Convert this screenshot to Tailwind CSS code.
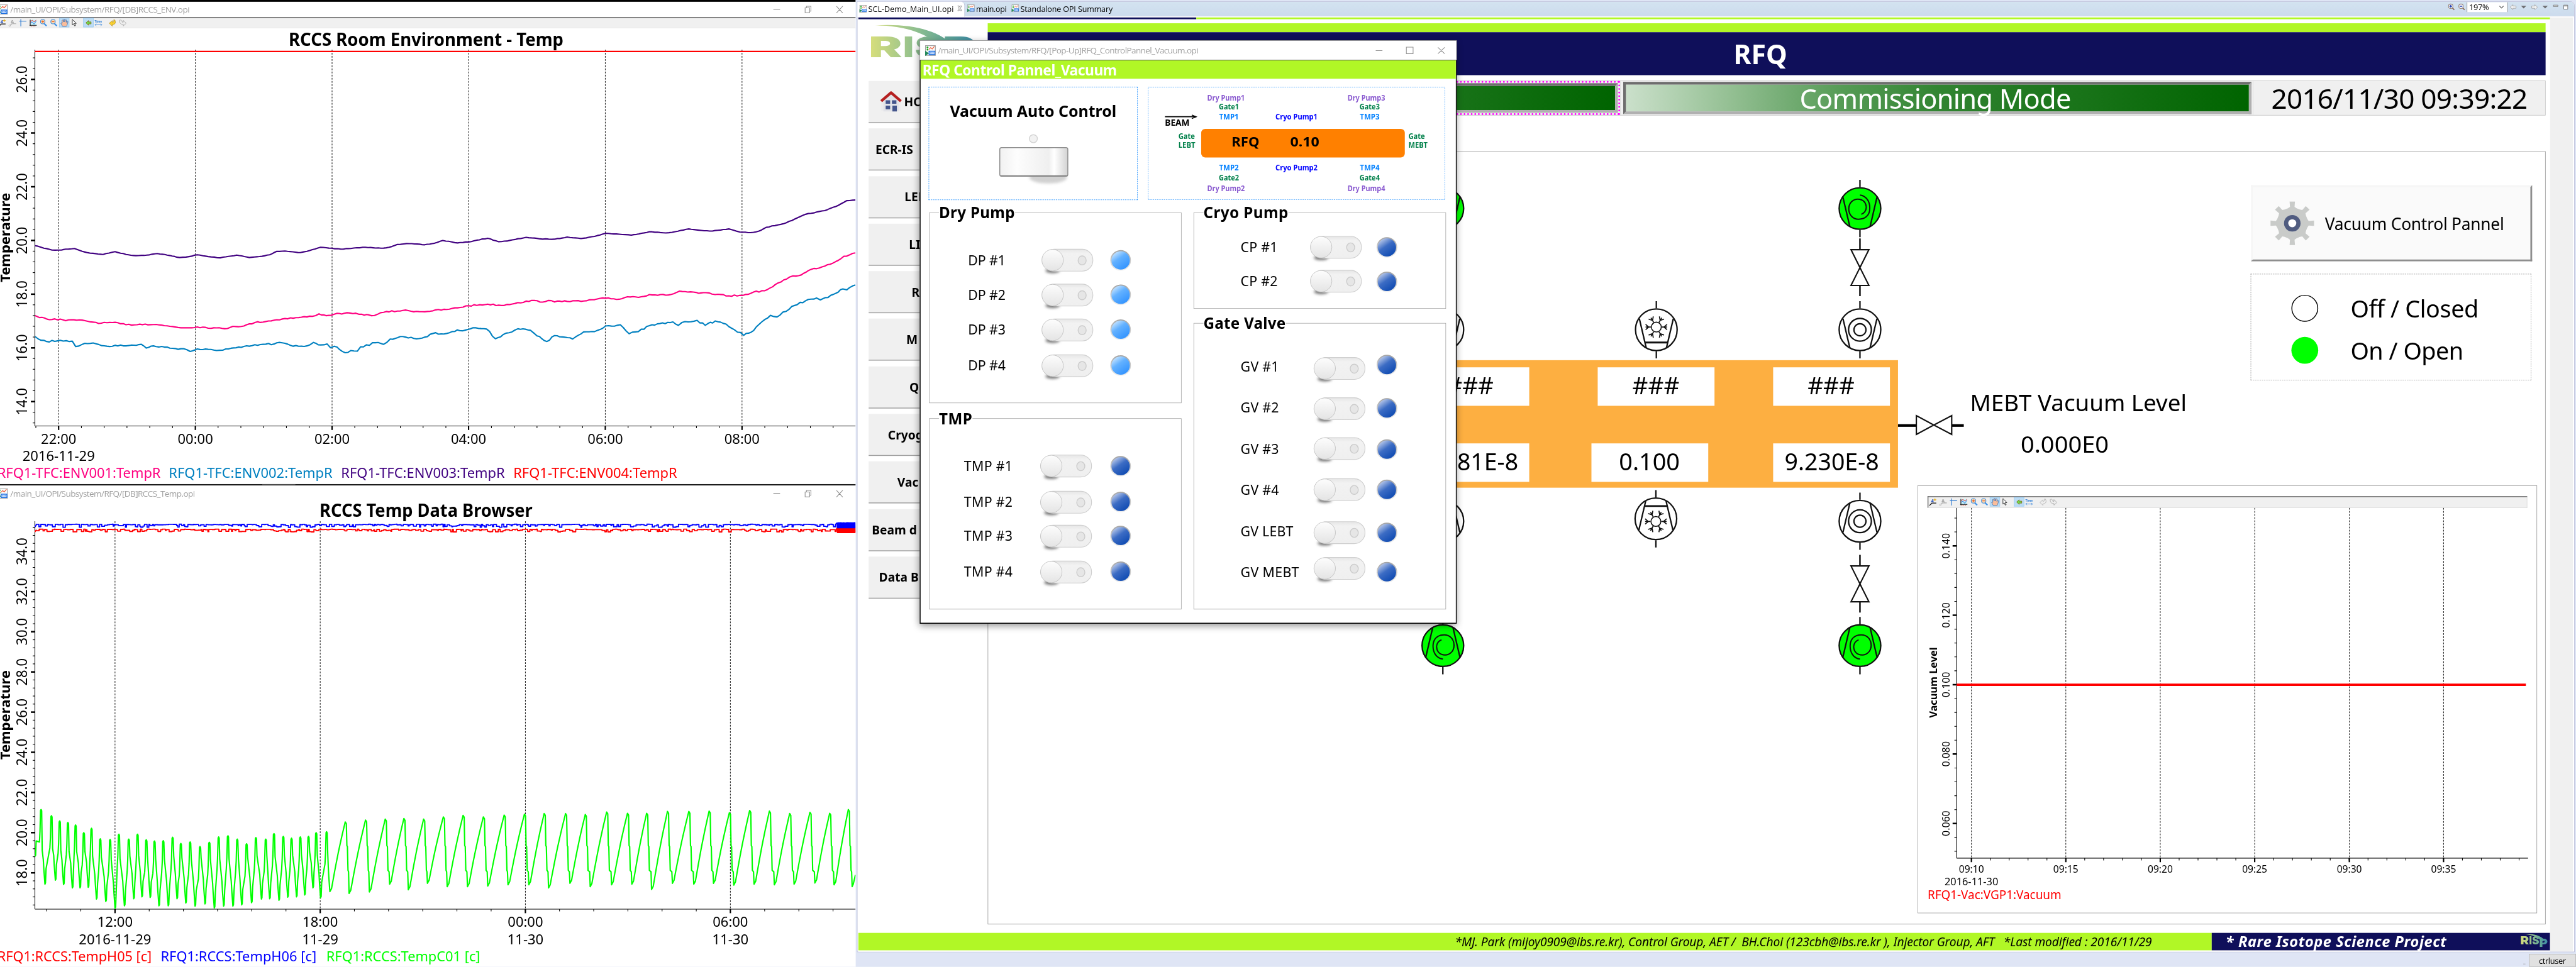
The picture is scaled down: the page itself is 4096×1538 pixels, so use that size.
<!DOCTYPE html>
<html lang="en">
<head>
<meta charset="utf-8">
<title>SCL-Demo Main UI - RFQ</title>
<script src="https://cdn.jsdelivr.net/npm/@tailwindcss/browser@4"></script>
</head>
<body class="w-[4096px] h-[1538px] overflow-hidden bg-white">
<!-- shared symbols -->
<svg class="absolute w-0 h-0" aria-hidden="true">
  <defs>
    <linearGradient id="risp" gradientUnits="userSpaceOnUse" x1="0" y1="0" x2="235" y2="0">
      <stop offset="0" stop-color="#d9df7b"/><stop offset=".45" stop-color="#8fbf8f"/><stop offset=".75" stop-color="#5fa596"/><stop offset="1" stop-color="#3f8ca6"/>
    </linearGradient>
    <linearGradient id="knob" x1="0" y1="0" x2="0" y2="1"><stop offset="0" stop-color="#fdfdfd"/><stop offset="1" stop-color="#e4e4e4"/></linearGradient>
    <linearGradient id="track" x1="0" y1="0" x2="0" y2="1"><stop offset="0" stop-color="#e6e6e6"/><stop offset=".2" stop-color="#f2f2f2"/><stop offset="1" stop-color="#efefef"/></linearGradient>
    <linearGradient id="ledOn" x1=".1" y1="0.05" x2=".7" y2=".9"><stop offset="0" stop-color="#d4ebff"/><stop offset=".45" stop-color="#63b1ff"/><stop offset="1" stop-color="#3897ff"/></linearGradient>
    <linearGradient id="ledOff" x1=".1" y1="0.05" x2=".7" y2=".9"><stop offset="0" stop-color="#c9d4ee"/><stop offset=".5" stop-color="#3c6cc4"/><stop offset="1" stop-color="#154fb4"/></linearGradient>
    <linearGradient id="ring" x1="0" y1="0" x2="0" y2="1"><stop offset="0" stop-color="#a2a2a2"/><stop offset="1" stop-color="#f0f0f0"/></linearGradient>
    <linearGradient id="rocker" x1="0" y1="0" x2="1" y2="0"><stop offset="0" stop-color="#f1f1f1"/><stop offset=".25" stop-color="#fdfdfd"/><stop offset=".72" stop-color="#efefef"/><stop offset=".8" stop-color="#ffffff"/><stop offset="1" stop-color="#d2d2d2"/></linearGradient>
    <filter id="soft" x="-50%" y="-50%" width="200%" height="200%"><feGaussianBlur stdDeviation="3"/></filter>

    <symbol id="opi" viewBox="0 0 24 24">
      <rect x="1" y="1" width="22" height="22" fill="#fafafa" stroke="#9b9b9b" stroke-width="1.6"/>
      <circle cx="5.500" cy="5" r="2" fill="#19a519"/><circle cx="5.500" cy="10" r="2" fill="#19a519"/>
      <path d="M0 12.500 L9 18 L0 24Z" fill="#23895a"/>
      <path d="M8.500 9.500 L12.500 5.500 L16 8.500 L21 2.500" fill="none" stroke="#ee5a33" stroke-width="1.600"/>
      <rect x="9" y="13.500" width="13" height="7.500" fill="#dceaff" stroke="#1c6fe0" stroke-width="2"/>
      <path d="M11.500 17.300h8" stroke="#1c6fe0" stroke-width="1.800" stroke-dasharray="1.800 1.200"/>
    </symbol>

    <symbol id="toolbar" viewBox="-7 40 300 22" overflow="visible">
      <g font-family="Noto Sans" font-weight="700">
        <path d="M-3 59 L3 53.500 H12.500" fill="none" stroke="#111" stroke-width="1.800"/><text x="1" y="52" font-size="10" font-style="italic" fill="#2a52be">A</text><path d="M9.500 43v6M6.500 46h6" stroke="#e8b020" stroke-width="1.800"/>
        <path d="M22 57 L26.500 53 H36" fill="none" stroke="#a5a5a5" stroke-width="1.600"/><circle cx="21.500" cy="57.500" r="1.700" fill="#fff" stroke="#a5a5a5"/><text x="24" y="52" font-size="10.500" fill="#a5a5a5">A</text>
        <path d="M46.500 43v16M43 47.500h16" stroke="#2f7bd0" stroke-width="1.600"/>
        <rect x="68" y="44" width="13" height="12" fill="#c8f4fa"/><path d="M67.500 44v14M66 56.500h16" stroke="#111" stroke-width="1.500"/><path d="M68 49l4-4 4 4 5-4" fill="none" stroke="#e02020" stroke-width="1.300"/><path d="M68 52l4-3 4 5 5-7" fill="none" stroke="#2a6fe0" stroke-width="1.300"/><path d="M69 58.500h12" stroke="#d03010" stroke-width="1.200" stroke-dasharray="2 2"/>
        <path d="M98 52l6 6" stroke="#3a8fe8" stroke-width="3"/><circle cx="95.500" cy="48.500" r="5" fill="#ffd9b0" stroke="#3f8ddd" stroke-width="1.500"/><path d="M92.500 48.500h6M95.500 45.500v6" stroke="#e25a1a" stroke-width="1.500"/>
        <path d="M121 52l6 6" stroke="#3a8fe8" stroke-width="3"/><circle cx="118.500" cy="48.500" r="5" fill="#ffd9b0" stroke="#3f8ddd" stroke-width="1.500"/><path d="M115.500 48.500h6" stroke="#e25a1a" stroke-width="1.500"/>
        <rect x="132.500" y="40.500" width="22" height="20" fill="#bcdcf4" stroke="#90c8f6"/><path d="M140 59 L136 52 q1-2 3 0 L138.500 45.500 q1.500-1.500 2.500 0 L142 49 V43.500 q1.300-1 2.500 0 V49 L146.500 44 q1.500-.5 2 .8 L148 50 L150.500 47.500 q1.500 0 1.300 1.500 L149.500 57 L148 59Z" fill="#fbbd9a" stroke="#2f6fb8" stroke-width="1.100"/>
        <path d="M161.500 43.500v12l2.800-2.500 2.500 5 2-1-2.300-4.800h4z" fill="#fff" stroke="#111" stroke-width="1.200"/>
        <rect x="186.500" y="40.500" width="22" height="20" fill="#bcdcf4" stroke="#90c8f6"/><path d="M192 51l5.500-5v3h6v4.500h-6v3z" fill="#6fdc4a" stroke="#8a6a1a" stroke-width="1.200"/>
        <text x="211.500" y="50" font-size="6.800" textLength="16.500" lengthAdjust="spacingAndGlyphs" fill="#2f80d8">Time</text><path d="M212.500 55.500h15M215 53l-2.500 2.500 2.500 2.500M225 53l2.500 2.500-2.500 2.500" fill="none" stroke="#2f80d8" stroke-width="1.100"/>
        <path d="M267 45.500c3-2 6 0 6 4h2.500v-4l6.500 6.500-6.500 6v-3.500c-6 .5-8.500-3-8.500-9z" fill="#eee" stroke="#a5a5a5" stroke-width="1.200"/>
      </g>
    </symbol>
    <path id="undo" d="M256.500 44.500c3 6 1 10.500-5.500 10.500v3.500l-7-6.500 7-6v3.500c3.500 0 4-2 3-5z"/>

    <!-- vacuum diagram symbols, centred on the origin -->
    <g id="body" stroke="#111" stroke-width="3.200" fill="none">
      <path d="M0 -64V-48M0 48V64"/><circle r="46.500"/><path d="M-38 -25L-22.500 41M38 -25L22.500 41"/>
    </g>
    <g id="tmp"><circle r="46" fill="#fff"/><use href="#body"/><circle r="25.500" fill="none" stroke="#111" stroke-width="3.200"/><circle r="13.500" fill="none" stroke="#111" stroke-width="3"/></g>
    <g id="dry"><circle r="46" fill="#00ff00"/><use href="#body"/><path d="M0 -30C15 -28 22 -15 22 -1C22 15 12 24 -3 24C-16 24 -25 14 -25 1C-25 -12 -16 -21 -5 -21C8 -21 14 -12 14 -2C14 5 9 11 3 13" fill="none" stroke="#111" stroke-width="2.800"/></g>
    <g id="arm" fill="none" stroke="#111" stroke-width="2.400"><path d="M12 0H24M24 -6L17 0L24 6"/></g>
    <g id="flake"><circle r="11" fill="none" stroke="#111" stroke-width="2.200"/><use href="#arm"/><use href="#arm" transform="rotate(60)"/><use href="#arm" transform="rotate(120)"/><use href="#arm" transform="rotate(180)"/><use href="#arm" transform="rotate(240)"/><use href="#arm" transform="rotate(300)"/></g>
    <g id="cryo"><circle r="46" fill="#fff"/><use href="#body"/><path d="M-25 28.500H25" stroke="#111" stroke-width="4"/><use href="#flake" y="-6"/></g>
    <g id="valve" fill="#fff" stroke="#111" stroke-width="3"><path d="M0 -65V-40M0 40V64" stroke-width="3.500"/><path d="M-20 -40H20L0 0ZM-20 40H20L0 0Z"/></g>

    <symbol id="switch" viewBox="-2 -2 120 62" overflow="visible">
      <ellipse cx="24" cy="49" rx="16" ry="5.500" fill="#777" filter="url(#soft)"/>
      <rect x="4" y="1" width="110" height="49" rx="24" fill="url(#track)" stroke="#cfcfcf" stroke-width="1.600"/>
      <ellipse cx="90" cy="26" rx="9" ry="10" fill="#e6e6e6" stroke="#cccccc" stroke-width="2"/>
      <circle cx="24" cy="25.500" r="24" fill="url(#knob)" stroke="#bdbdbd" stroke-width="1.200"/>
    </symbol>
  </defs>
</svg>

<div class="w-[4096px] h-[1538px] overflow-hidden [contain:strict]">
<div class="flex w-[5756px] h-[2161px] origin-top-left scale-[0.71161] bg-[#dfe5f5] font-['Noto_Sans',sans-serif] text-black overflow-hidden">

  <!-- left monitor: two trend windows -->
  <div class="flex flex-col w-[1912px] shrink-0 bg-white overflow-hidden">
    <div class="h-[4px] shrink-0 bg-black"></div>
    <div class="flex items-center h-[34px] shrink-0 text-[#a0a0a0]">
      <svg class="w-[25px] h-[24px] -ml-[7px] mr-[5px] shrink-0"><use href="#opi" width="25" height="24"/></svg>
      <span class="font-['Open_Sans',sans-serif] text-[19px] leading-none whitespace-pre" data-w="400">/main_UI/OPI/Subsystem/RFQ/[DB]RCCS_ENV.opi</span>
      <svg class="ml-auto w-[188px] h-[24px] shrink-0" viewBox="-12 0 188 24" fill="none" stroke="#8f8f8f" stroke-width="1.500"><path d="M-8 12h15M63 8.500h10v11h-10zM66 8.500v-3.500h10v11h-3M133 5l14 15M147 5l-14 15" /></svg>
    </div>
    <div class="h-[25px] shrink-0 bg-[#f0f0f0] border-t-2 border-t-[#696969] border-b border-b-[#e3e3e3]">
      <svg class="w-[300px] h-[22px] -ml-[7px] overflow-visible"><use href="#toolbar" width="300" height="22"/><g transform="translate(7 -40)"><use href="#undo" fill="#f8d030" stroke="#b08a18"/></g></svg>
    </div>
    <svg id="env" class="w-[1912px] h-[1019px] shrink-0" viewBox="0 63 1912 1019"></svg>
    <div class="h-[3px] bg-[#1c1c1c] shrink-0 pl-[586px]"><div class="w-[74px] h-[3px] bg-[#4a4a4a]"></div></div>
    <div class="flex items-center h-[36px] shrink-0 text-[#a0a0a0]">
      <svg class="w-[25px] h-[24px] -ml-[7px] mr-[5px] shrink-0"><use href="#opi" width="25" height="24"/></svg>
      <span class="font-['Open_Sans',sans-serif] text-[19px] leading-none whitespace-pre" data-w="412">/main_UI/OPI/Subsystem/RFQ/[DB]RCCS_Temp.opi</span>
      <svg class="ml-auto w-[188px] h-[24px] shrink-0" viewBox="-12 0 188 24" fill="none" stroke="#8f8f8f" stroke-width="1.500"><path d="M-8 12h15M63 8.500h10v11h-10zM66 8.500v-3.500h10v11h-3M133 5l14 15M147 5l-14 15" /></svg>
    </div>
    <svg id="temp" class="w-[1912px] h-[1040px] shrink-0" viewBox="0 1121 1912 1040"></svg>
  </div>

  <!-- right monitor: main operator window -->
  <div class="relative flex flex-col flex-1 pt-[3px] pl-[3px]">
    <div class="flex flex-col h-[2125px] w-[3838px] shrink-0 bg-white border border-[#b2b6d0] rounded-tr-[10px]">
      <!-- tab bar -->
      <div class="flex h-[33px] shrink-0 bg-gradient-to-b from-[#d3e3f0] to-[#ccdbed] border-b border-[#b2b6d0] rounded-tr-[10px] font-['Open_Sans',sans-serif] text-[17.5px] leading-none text-black">
        <div class="flex items-center w-[240px] h-[34px] shrink-0 bg-white rounded-tr-[8px] border-r border-[#b2b6d0] pl-[4px]">
          <svg class="w-[17px] h-[17px] mb-[4px] mr-[3px] shrink-0"><use href="#opi" width="17" height="17"/></svg><span class="whitespace-pre" data-w="191">SCL-Demo_Main_UI.opi</span>
          <svg class="w-[11px] h-[13px] ml-[8px] mb-[6px] shrink-0" viewBox="0 0 11 13"><path d="M1 1h3l1.500 3L7 1h3L7 6.500 10 12H7L5.500 9 4 12H1L4 6.500z" fill="#fff" stroke="#777"/></svg>
        </div>
        <div class="flex items-center pl-[5px]"><svg class="w-[17px] h-[17px] mb-[4px] mr-[3px] shrink-0"><use href="#opi" width="17" height="17"/></svg><span class="whitespace-pre" data-w="68">main.opi</span></div>
        <div class="flex items-center pl-[11px]"><svg class="w-[17px] h-[17px] mb-[4px] mr-[3px] shrink-0"><use href="#opi" width="17" height="17"/></svg><span class="whitespace-pre" data-w="206">Standalone OPI Summary</span></div>
        <div class="flex items-start ml-auto pt-[1px]">
          <svg class="w-[40px] h-[22px] shrink-0" viewBox="5470 5 40 22"><g stroke-width="1.500"><path d="M5479 17l5 5M5502 17l5 5" stroke="#8a6a5a" stroke-width="2.500"/><circle cx="5476" cy="14" r="5" fill="#f4f6ff" stroke="#9a8878"/><circle cx="5499" cy="14" r="5" fill="#f4f6ff" stroke="#9a8878"/><path d="M5473 14h6M5476 11v6M5496 14h6" stroke="#2640b0" stroke-width="2"/></g></svg>
          <div class="flex items-center w-[91px] h-[22px] ml-[2px] bg-white border-x border-[#7a7a7a] pl-[4px] shrink-0"><span class="text-[18px] leading-none" data-w="44">197%</span><svg class="w-[11px] h-[8px] ml-[23px] shrink-0" viewBox="0 0 11 8"><path d="M1 1.500l4.500 4.500 4.500-4.500" fill="none" stroke="#444" stroke-width="1.500"/></svg></div>
          <svg class="w-[149px] h-[22px] shrink-0" viewBox="5603 5 149 22"><path d="M5609 16l6-5.500v3h7v5h-7v3zM5670 16l-6-5.500v3h-7v5h7v3z" fill="#f2f2f2" stroke="#a0a0a0" stroke-width="1.200"/><path d="M5633 13h12l-6 6zM5681 13h12l-6 6z" fill="#6e6e72"/><path d="M5705.500 11.500h10v3h-10zM5728.500 11.500h9v9h-9zM5728.500 13.500h9" fill="#fff" stroke="#6a6a6a" stroke-width="1.200"/></svg>
        </div>
      </div>

      <!-- OPI display -->
      <div class="flex flex-1 min-h-0 pt-[2px] pl-[2px]">
        <div class="flex flex-col w-[3780px] shrink-0 bg-white">
          <div class="flex h-[4px] shrink-0"><div class="w-[755px] bg-[#0f0f5a]"></div><div class="flex-1 bg-[#b1f726]"></div></div>
          <div class="flex h-[2042px] shrink-0 pt-[9px]">
            <!-- navigation -->
            <div class="w-[289px] shrink-0 pl-[23px]">
              <svg class="w-[260px] h-[129px]" viewBox="0 0 260 129">
                <path d="M14 5C70 4 150 22 172 70L195 56C160 14 90 0 14 5Z" fill="url(#risp)"/>
                <g font-family="Inter" font-weight="900" font-size="63" fill="url(#risp)">
                  <text x="0" y="76" textLength="75" lengthAdjust="spacingAndGlyphs">R</text><text x="77" y="76" textLength="24" lengthAdjust="spacingAndGlyphs">I</text><text x="103" y="76" textLength="62" lengthAdjust="spacingAndGlyphs">S</text><text x="165" y="76" textLength="74" lengthAdjust="spacingAndGlyphs">P</text>
                </g>
              </svg>
              <div id="nav" class="flex flex-col gap-[12.300px] text-[27px] font-bold"></div>
            </div>
            <!-- page -->
            <div class="flex flex-col w-[3481px] shrink-0">
              <div class="h-[20px] shrink-0 bg-[#b1f726]"></div>
              <div class="flex h-[96px] shrink-0 items-center justify-center bg-[#0f0f5a] text-white font-bold text-[60px] pr-[28px] pb-[1px]"><span class="leading-none whitespace-pre" data-w="120">RFQ</span></div>
              <div class="flex h-[78px] mt-[12px] shrink-0 bg-[#f0f0f0] border-y border-[#c0c0c0]">
                <div class="w-[1413px] shrink-0 border-4 border-dotted border-[#ff00ff] p-[1px]"><div class="w-full h-full border-[6px] border-t-[#6e6e6e] border-l-[#6e6e6e] border-b-[#b0b0b0] border-r-[#b0b0b0] [background-image:linear-gradient(90deg,#cbe0cb,#328532_50%,#1a741a_72%,#006400)]"></div></div>
                <div class="w-[1415px] shrink-0 border-x border-[#d8d8d8] py-[2px] pl-[6px] pr-[3px]"><div class="flex items-center w-full h-full border-[6px] border-t-[#6e6e6e] border-l-[#6e6e6e] border-b-[#b0b0b0] border-r-[#b0b0b0] [background-image:linear-gradient(90deg,#cbe0cb,#93bf92_17%,#7ab07a_24%,#559b55_35%,#328532_50%,#207820_65%,#006400)] pl-[388px] text-white text-[61px]"><span class="leading-none whitespace-pre" data-w="606">Commissioning Mode</span></div></div>
                <div class="flex flex-1 items-center justify-center border-r border-[#c0c0c0] text-[62px]"><span class="leading-none whitespace-pre" data-w="572">2016/11/30 09:39:22</span></div>
              </div>
              <div class="relative w-[3481px] h-[1728px] mt-[80px] shrink-0 border border-[#8c8c8c]">
                <svg id="mimic" class="absolute left-0 top-0 w-[3479px] h-[1726px]" viewBox="2208 339 3479 1726"></svg>
                <div class="relative flex flex-col items-end pt-[75px] pr-[18px]">
                  <div class="flex items-center w-[628px] h-[170px] mr-[11px] pl-[38px] bg-[#fafafa] border-4 border-t-[#f6f6f6] border-l-[#f6f6f6] border-r-[#8e8e8e] border-b-[#8e8e8e]">
                    <svg class="w-[100px] h-[98px] shrink-0" viewBox="-50 -49 100 98"><g id="gear" fill="#c9cbc9"></g><circle r="18.500" fill="#505c80"/><circle r="9" fill="#fff"/></svg>
                    <span class="ml-[23px] text-[37px] leading-none whitespace-pre" data-w="400">Vacuum Control Pannel</span>
                  </div>
                  <div class="flex flex-col w-[627px] h-[238px] mt-[28px] mr-[13px] pt-[46px] pl-[90px] gap-[34px] border border-dashed border-[#8c8c8c] text-[53px]">
                    <div class="flex items-center h-[60px] gap-[72px]"><div class="w-[60px] h-[60px] shrink-0 rounded-full border-2 border-black"></div><span class="leading-none whitespace-pre" data-w="286">Off / Closed</span></div>
                    <div class="flex items-center h-[60px] gap-[72px]"><div class="w-[60px] h-[60px] shrink-0 rounded-full bg-[#00ff00]"></div><span class="leading-none whitespace-pre" data-w="252">On / Open</span></div>
                  </div>
                  <div class="w-[1384px] h-[956px] mt-[235px] pt-[23px] px-[21px] border border-[#8c8c8c] bg-white">
                    <div class="h-[26px] bg-[#f0f0f0] border-t-2 border-l-2 border-t-[#696969] border-l-[#696969] border-b border-r border-b-[#d8d8d8] border-r-[#d8d8d8]"><svg class="w-[300px] h-[22px] -ml-[2px] overflow-visible"><use href="#toolbar" width="300" height="22"/><g transform="translate(7 -40)"><use href="#undo" fill="#eee" stroke="#a5a5a5"/></g></svg></div>
                    <svg id="vac" class="w-[1342px] h-[900px]" viewBox="4308 1135 1342 900"></svg>
                  </div>
                </div>
              </div>
            </div>
          </div>
          <!-- footer -->
          <div class="flex mt-auto h-[39px] shrink-0 mb-[3px]">
            <div class="flex items-center w-[3024px] shrink-0 pl-[1333px] bg-[#b1f726] italic text-[27px]"><span class="leading-none whitespace-pre" data-w="1557">*MJ. Park (mijoy0909@ibs.re.kr), Control Group, AET /  BH.Choi (123cbh@ibs.re.kr ), Injector Group, AFT   *Last modified : 2016/11/29</span></div>
            <div class="flex items-center flex-1 pl-[31px] bg-[#0f0f5a] text-white italic font-bold text-[33px]"><span class="leading-none whitespace-pre" data-w="494">* Rare Isotope Science Project</span>
              <svg class="w-[62px] h-[34px] shrink-0 ml-auto mr-[5px]" viewBox="-2 -2 242 128"><path d="M14 -6C70 -6 150 12 190 60L215 50C175 0 90 -12 14 -6Z" fill="url(#risp)"/><g font-family="Inter" font-weight="900" font-size="96" font-style="normal" fill="url(#risp)"><text x="0" y="86" textLength="75" lengthAdjust="spacingAndGlyphs">R</text><text x="77" y="86" textLength="24" lengthAdjust="spacingAndGlyphs">I</text><text x="103" y="86" textLength="62" lengthAdjust="spacingAndGlyphs">S</text><text x="165" y="108" textLength="74" lengthAdjust="spacingAndGlyphs">P</text></g></svg>
            </div>
          </div>
        </div>
        <div class="w-[51px] h-[2087px] bg-[#f0f0f0]"></div>
      </div>
    </div>
    <!-- status line -->
    <div class="flex flex-1 items-end justify-end"><span class="mb-[6px] mr-[8px] w-[5px] h-px bg-[#999]"></span><div class="flex items-center w-[105px] h-[29px] pl-[21px] bg-[#e1e1e1] border border-[#adadad] font-['Open_Sans',sans-serif] text-[18px]"><span class="leading-none" data-w="60">ctrluser</span></div></div>

    <!-- vacuum control pop-up -->
    <div class="absolute left-[143px] top-[90px] w-[1200px] h-[1304px] flex flex-col bg-white shadow-[0_6px_16px_rgba(0,0,0,0.45)]">
      <div class="flex items-center h-[44px] shrink-0 pl-[11px] border-t border-x border-[#777] text-[#a0a0a0]">
        <svg class="w-[24px] h-[24px] mr-[5px] shrink-0"><use href="#opi" width="24" height="24"/></svg>
        <span class="font-['Open_Sans',sans-serif] text-[19px] leading-none whitespace-pre" data-w="581">/main_UI/OPI/Subsystem/RFQ/[Pop-Up]RFQ_ControlPannel_Vacuum.opi</span>
        <svg class="w-[170px] h-[24px] shrink-0 ml-auto mr-[14px]" viewBox="3070 100 170 24" fill="none" stroke="#8f8f8f" stroke-width="1.500"><path d="M3074 112h15M3142.500 104.500h15v14.500h-15zM3213 105l15 14M3228 105l-15 14"/></svg>
      </div>
      <div class="flex flex-col flex-1 border-2 border-t border-black">
        <div class="flex items-center h-[41px] shrink-0 pl-[4px] bg-[#b1f726] text-white font-bold text-[32px]"><span class="leading-none whitespace-pre" data-w="434">RFQ Control Pannel_Vacuum</span></div>
        <div class="flex shrink-0 mt-[18px] ml-[18px] gap-[23px]">
          <div class="flex flex-col items-center w-[467px] h-[253px] shrink-0 pt-[32px] border border-dashed border-[#0080ff] text-[35px] font-bold">
            <span class="leading-[42px] whitespace-pre" data-w="372">Vacuum Auto Control</span>
            <svg class="w-[200px] h-[130px] mt-[17px] shrink-0" viewBox="2207 285 200 130">
              <ellipse cx="2340" cy="396" rx="42" ry="13" fill="#b8b8b8" opacity=".65" filter="url(#soft)"/>
              <ellipse cx="2307" cy="309" rx="9" ry="9" fill="#f2f2f2" stroke="#d4d4d4" stroke-width="2"/>
              <rect x="2232" y="329" width="152" height="64" rx="4" fill="url(#rocker)" stroke="#8c8c8c" stroke-width="2"/><path d="M2234 392h148" stroke="#777" stroke-width="2"/>
            </svg>
          </div>
          <svg id="sketch" class="w-[664px] h-[253px] shrink-0" viewBox="2564 194 664 253"></svg>
        </div>
        <div class="flex flex-1 mt-[28px] ml-[19px] gap-[27px] text-[30px]">
          <div class="flex flex-col w-[564px] shrink-0 gap-[34px]">
            <div class="h-[426px] border border-[#9a9a9a]"><div class="flex h-[1px] pl-[21px] items-center font-bold text-[34px]"><span class="bg-white leading-none whitespace-pre mb-[4px]" data-w="170">Dry Pump</span></div><div id="dp" class="flex flex-col"></div></div>
            <div class="h-[427px] border border-[#9a9a9a]"><div class="flex h-[1px] pl-[21px] items-center font-bold text-[34px]"><span class="bg-white leading-none whitespace-pre mb-[4px]" data-w="75">TMP</span></div><div id="tm" class="flex flex-col"></div></div>
          </div>
          <div class="flex flex-col w-[564px] shrink-0 gap-[32px]">
            <div class="h-[215px] border border-[#9a9a9a]"><div class="flex h-[1px] pl-[21px] items-center font-bold text-[34px]"><span class="bg-white leading-none whitespace-pre mb-[4px]" data-w="190">Cryo Pump</span></div><div id="cp" class="flex flex-col"></div></div>
            <div class="h-[640px] border border-[#9a9a9a]"><div class="flex h-[1px] pl-[21px] items-center font-bold text-[34px]"><span class="bg-white leading-none whitespace-pre mb-[4px]" data-w="184">Gate Valve</span></div><div id="gv" class="flex flex-col"></div></div>
          </div>
        </div>
      </div>
    </div>
  </div>
</div>
</div>

<script>
const $ = id => document.getElementById(id);
let seed = 7;
const rnd = () => (seed = (seed * 16807) % 2147483647) / 2147483647;
const L = (x1, y1, x2, y2, w = 1.5, c = '#000', d = '') => `<path d="M${x1} ${y1}L${x2} ${y2}" stroke="${c}" stroke-width="${w}" ${d ? `stroke-dasharray="${d}"` : ''} fill="none"/>`;
const T = (x, y, s, len, size, o = {}) => `<text x="${x}" y="${y}" font-family="Noto Sans" font-size="${size}" ${len ? `textLength="${len}" lengthAdjust="spacingAndGlyphs"` : ''} text-anchor="${o.a || 'start'}" font-weight="${o.w || 400}" fill="${o.c || '#000'}" ${o.r ? `transform="rotate(-90 ${x} ${y})"` : ''}>${s}</text>`;
const poly = (pts, c, w) => `<polyline points="${pts.map(p => p[0].toFixed(1) + ',' + p[1].toFixed(1)).join(' ')}" fill="none" stroke="${c}" stroke-width="${w}" stroke-linejoin="round"/>`;

function axes(o) {
  let s = L(o.x0, o.y0, o.x0, o.y1) + L(o.x0, o.y1, o.x1, o.y1);
  for (const [v, y] of o.ys) s += L(o.x0 - 9, y, o.x0, y, 3.5) + T(o.lx, y, v, o.lw, o.lf, {a: 'middle', r: 1});
  for (let y = o.ys[0][1]; y > o.y0; y -= o.my) s += L(o.x0 - 5, y, o.x0, y);
  for (let y = o.ys[0][1]; y < o.y1; y += o.my) s += L(o.x0 - 5, y, o.x0, y);
  for (const [v, x, d] of o.xs) {
    s += L(x, o.y0, x, o.y1, 1.3, '#000', '4 3') + L(x, o.y1, x, o.y1 + 9, 3) + T(x, o.ty, v, o.tw, o.tf, {a: 'middle'});
    if (d) s += T(x, o.dy, d, 0, o.df || o.tf, {a: 'middle'});
  }
  for (let x = o.xs[0][1]; x > o.x0; x -= o.mx) s += L(x, o.y1, x, o.y1 + 5);
  for (let x = o.xs[0][1]; x < o.x1; x += o.mx) s += L(x, o.y1, x, o.y1 + 5);
  return s;
}
const parse = t => t.split(';').map(p => p.split(',').map(Number));
// trend samples are kept on a 1568-unit grid
const KX = 1.2245;
function trace(t, ky, y0, jit) {
  const p = parse(t), out = [];
  for (let i = 0; i < p.length - 1; i++) {
    const [a, b] = [p[i], p[i + 1]], n = Math.max(1, Math.round((b[0] - a[0]) / 5));
    for (let k = 0; k < n; k++) out.push([(a[0] + (b[0] - a[0]) * k / n) * KX, y0 + (a[1] + (b[1] - a[1]) * k / n + (k ? (rnd() - .5) * jit : 0)) * ky]);
  }
  const e = p[p.length - 1]; out.push([e[0] * KX, y0 + e[1] * ky]);
  return out;
}

const purple = '64,790;75,795;95,804;112,804;120,801;136,799;150,808;165,814;188,818;210,809;230,818;248,822;268,820;287,815;305,820;328,828;345,825;360,819;380,825;402,829;432,820;455,828;478,824;492,819;505,808;520,807;548,812;560,808;585,795;605,798;622,801;640,799;662,795;695,798;710,795;725,786;742,783;775,787;793,782;808,773;835,781;855,778;870,772;890,766;910,777;925,775;960,763;985,768;1012,769;1035,762;1060,767;1085,760;1105,750;1130,753;1152,756;1185,745;1215,749;1232,745;1257,736;1280,741;1300,743;1330,736;1350,746;1370,748;1385,743;1398,731;1430,719;1445,709;1470,689;1505,677;1530,660;1545,645;1561,643';
const pink = '64,1015;72,1021;95,1027;110,1026;120,1031;135,1028;160,1033;185,1039;205,1037;230,1044;265,1042;285,1043;300,1047;335,1054;360,1051;390,1054;410,1057;425,1049;445,1048;465,1037;490,1032;520,1024;545,1021;570,1017;582,1009;595,1015;610,1010;628,1007;660,1010;678,1015;700,1004;735,998;770,1002;820,994;855,983;890,978;915,982;945,973;975,966;985,971;1000,966;1012,971;1030,967;1060,969;1105,959;1130,962;1145,954;1170,954;1185,947;1215,949;1230,944;1240,936;1275,943;1288,941;1305,947;1330,951;1355,950;1375,939;1395,935;1410,922;1430,900;1447,887;1462,884;1480,866;1500,858;1525,841;1540,824;1561,813';
const teal = '64,1082;70,1090;85,1098;110,1094;132,1097;138,1114;150,1107;175,1105;195,1113;210,1110;230,1112;258,1107;267,1119;280,1112;300,1116;315,1120;335,1121;347,1130;360,1122;395,1127;412,1122;440,1117;480,1107;500,1106;510,1101;535,1113;560,1112;572,1101;585,1109;597,1106;603,1118;610,1113;630,1134;640,1127;652,1129;658,1115;685,1102;700,1107;712,1090;735,1082;755,1088;770,1087;790,1072;810,1074;825,1066;868,1054;888,1058;904,1089;918,1076;945,1057;968,1062;980,1080;998,1098;1012,1079;1045,1090;1065,1067;1085,1066;1105,1048;1132,1044;1148,1073;1165,1066;1185,1047;1228,1035;1238,1046;1250,1034;1272,1030;1287,1046;1305,1032;1325,1042;1340,1060;1357,1078;1375,1063;1390,1035;1406,1014;1418,1019;1445,985;1470,967;1490,958;1497,964;1525,943;1538,929;1545,932;1561,916';

$('env').innerHTML =
  T(952, 102, 'RCCS Room Environment - Temp', 614, 40, {a: 'middle', w: 700}) +
  axes({x0: 78, x1: 1912, y0: 111, y1: 952, lx: 61, lw: 61, lf: 33, my: 24, mx: 50.9, ty: 992, tw: 79, tf: 31, dy: 1030,
    ys: [26, 24, 22, 20, 18, 16, 14].map((v, i) => [v.toFixed(1), 177.3 + i * 120.05]),
    xs: [['22:00', 131, '2016-11-29'], ['00:00', 436.5], ['02:00', 742], ['04:00', 1047], ['06:00', 1352.5], ['08:00', 1658]]}) +
  T(22, 531, 'Temperature', 200, 30, {a: 'middle', w: 700, r: 1}) +
  L(78, 115, 1912, 115, 3, '#ff0000') +
  poly(trace(purple, .6952, 0, 1.5), '#400080', 3) + poly(trace(pink, .6952, 0, 4.5), '#ff0080', 3) + poly(trace(teal, .6952, 0, 6), '#0080c0', 3) +
  T(-6, 1068, 'RFQ1-TFC:ENV001:TempR', 365, 31, {c: '#ff0080'}) + T(377, 1068, 'RFQ1-TFC:ENV002:TempR', 366, 31, {c: '#0080c0'}) +
  T(762, 1068, 'RFQ1-TFC:ENV003:TempR', 366, 31, {c: '#400080'}) + T(1147, 1068, 'RFQ1-TFC:ENV004:TempR', 366, 31, {c: '#ff0000'});

// heater and chiller temperatures
const KY = .6894, Y0 = 1080;
function band(mid, lo) {
  const p = [[78, Y0 + (mid + 6) * KY]]; let x = 66, y = mid;
  while (x < 1526) {
    const r = rnd(); const v = r < .62 ? mid - 3 + rnd() * 2 : mid + rnd() * lo;
    p.push([x * KX, Y0 + y * KY], [x * KX, Y0 + v * KY]); y = v; x += 1.5 + rnd() * 4;
  }
  for (; x < 1561; x += .8) p.push([x * KX, Y0 + (mid - 8 + rnd() * 1.5) * KY], [(x + .4) * KX, Y0 + (mid + 8) * KY]);
  return p;
}
const fast = parse('64,1210;75,1058;82,1300;94,1078;101,1287;109,1095;116,1301;124,1100;132,1312;138,1108;146,1312;153,1133;161,1310;167,1119;176,1348;183,1153;193,1356;201,1155;210,1378;217,1138;227,1370;235,1154;244,1347;251,1138;259,1341;267,1156;274,1343;282,1160;290,1370;298,1159;307,1370;315,1148;323,1347;330,1168;339,1361;347,1163;356,1371;365,1178;374,1364;382,1164;391,1377;399,1147;408,1371;416,1143;425,1371;433,1154;441,1367;450,1169;459,1360;467,1149;477,1348;485,1154;492,1347;500,1136;509,1352;517,1145;525,1342;532,1151;541,1341;548,1147;556,1335;563,1145;571,1312;577,1133;585,1344;596,1130;602,1324');
const slow = parse('631,1098,637,1330;668,1092,674,1325;704,1089,711,1300;738,1087,745,1318;774,1089,780,1297;810,1082,816,1308;846,1077,853,1308;883,1082,890,1306;921,1076,927,1302;958,1073,965,1302;994,1071,1001,1312;1033,1071,1040,1297;1069,1074,1077,1308;1108,1066,1116,1302;1146,1070,1153,1300;1181,1070,1189,1317;1219,1064,1227,1297;1258,1064,1266,1300;1295,1063,1302,1297;1332,1068,1339,1303;1369,1061,1376,1300;1405,1063,1413,1302;1442,1071,1449,1300;1479,1067,1487,1296;1515,1070,1522,1302;1549,1058,1555,1308');
const saw = [];
fast.forEach((p, i) => {
  saw.push(p);
  const q = fast[i + 1];
  if (q && q[1] > p[1]) { saw.push([p[0] + 1, p[1] + 4], [p[0] + 2, 1190 + (q[1] - 1300) * .4], [q[0] - 3, q[1] - 80], [q[0] - 2, q[1] - 48]); }
  else if (q) saw.push([p[0] + 1, p[1] - 4], [p[0] + 2, p[1] - 50], [q[0] - 3, q[1] + 105], [q[0] - 2, q[1] + 70], [q[0] - 1, q[1] + 3]);
});
slow.forEach(([px, py, bx, by]) => {
  const s = saw[saw.length - 1], x0 = s[0] + 3, y0 = s[1] - 10;
  for (let k = 0; k < 10; k++) saw.push([x0 + (px - 1 - x0) * k / 10, y0 + (py - y0) * k / 10 - Math.sin(k / 10 * Math.PI) * 10]);
  saw.push([px - 1, py], [px + 1, py + 6], [px + 2, 1175], [px + 3, 1178], [px + 4, 1255], [bx - 1, 1260], [bx, by]);
});
saw.push([1557, 1300], [1561, 1270]);
$('temp').innerHTML =
  T(952, 1154.5, 'RCCS Temp Data Browser', 476, 40, {a: 'middle', w: 700}) +
  axes({x0: 78, x1: 1912, y0: 1165, y1: 2032, lx: 61, lw: 61, lf: 33, my: 17.96, mx: 76.4, ty: 2072, tw: 79, tf: 31, dy: 2110.5,
    ys: [34, 32, 30, 28, 26, 24, 22, 20, 18].map((v, i) => [v.toFixed(1), 1232.4 + i * 89.8]),
    xs: [['12:00', 257, '2016-11-29'], ['18:00', 715.5, '11-29'], ['00:00', 1174, '11-30'], ['06:00', 1632, '11-30']]}) +
  T(22, 1598, 'Temperature', 200, 30, {a: 'middle', w: 700, r: 1}) +
  poly(band(152, 6), '#ff0000', 2.6) + poly(band(136, 7), '#0000ff', 2.6) +
  poly(saw.map(([x, y]) => [x * KX, Y0 + y * KY]), '#00ff00', 3) +
  T(-6, 2149, 'RFQ1:RCCS:TempH05 [c]', 345, 31, {c: '#ff0000'}) + T(359, 2149, 'RFQ1:RCCS:TempH06 [c]', 348, 31, {c: '#0000ff'}) + T(729, 2149, 'RFQ1:RCCS:TempC01 [c]', 344, 31, {c: '#00ff00'});

$('vac').innerHTML =
  axes({x0: 4373, x1: 5650, y0: 1135, y1: 1918, lx: 4358, lw: 57, lf: 23, my: 31.03, mx: 42.2, ty: 1951, tw: 56, tf: 22, dy: 1979, df: 23,
    ys: [.14, .12, .1, .08, .06].map((v, i) => [v.toFixed(3), 1220 + i * 155.1]),
    xs: [['09:10', 4406, '2016-11-30'], ['09:15', 4617], ['09:20', 4828], ['09:25', 5039], ['09:30', 5250.5], ['09:35', 5461]]}) +
  T(4329, 1525.5, 'Vacuum Level', 158, 22, {a: 'middle', w: 700, r: 1}) +
  L(4373, 1530.5, 5645, 1530.5, 5, '#ff0000') +
  T(4308, 2010, 'RFQ1-Vac:VGP1:Vacuum', 299, 27, {c: '#ff0000'});

// beamline diagram
const U = (id, x, y, r = 0) => `<use href="#${id}" transform="translate(${x} ${y}) rotate(${r})"/>`;
const box = (x, y) => `<rect x="${x}" y="${y}" width="261" height="86" fill="#fff"/>`;
$('mimic').innerHTML =
  '<rect x="2700" y="805" width="1541" height="285" fill="#fdaf41"/>' +
  box(3156, 821) + box(3570, 821) + box(3962, 821) + box(3156, 991) + box(3556, 991) + box(3962, 991) +
  T(3285, 880.5, '###', 105, 53, {a: 'middle'}) + T(3700, 880.5, '###', 105, 53, {a: 'middle'}) + T(4091.5, 880.5, '###', 105, 53, {a: 'middle'}) +
  T(3287, 1051, '9.281E-8', 211, 53, {a: 'middle'}) + T(3685.5, 1051, '0.100', 136, 53, {a: 'middle'}) + T(4093, 1051, '9.230E-8', 211, 53, {a: 'middle'}) +
  U('dry', 3224, 466) + U('tmp', 3224, 737) + U('tmp', 3224, 1165, 180) + U('dry', 3224, 1443, 180) +
  U('cryo', 3701, 737) + U('cryo', 3700, 1159.5, 180) +
  U('dry', 4156, 466) + U('valve', 4156, 598) + U('tmp', 4156, 737) + U('tmp', 4156, 1165, 180) + U('valve', 4156, 1305) + U('dry', 4156, 1443, 180) +
  L(4241, 951, 4281, 951, 6) + L(4361, 951, 4388, 951, 6) +
  '<path d="M4282 929V971L4321 950ZM4361 929V971L4321 950Z" fill="#fff" stroke="#111" stroke-width="3"/>' +
  T(4402, 919.5, 'MEBT Vacuum Level', 484, 52) + T(4515, 1012, '0.000E0', 197, 52);

// pop-up sketch
const pv = '#8a5ad0', pg = '#00804a', pt = '#0080ff', pc = '#0000ff', m = {a: 'middle', w: 700};
$('sketch').innerHTML =
  '<rect x="2564.5" y="194.500" width="663" height="252" fill="none" stroke="#0080ff" stroke-dasharray="3 2"/>' +
  '<rect x="2683" y="288" width="455" height="64" rx="9" fill="#ff8000"/>' +
  [[2738.5, 1, 'up'], [3052, 3, 'up'], [2738.5, 2, 'dn'], [3052, 4, 'dn']].map(([x, n, d]) => {
    const gx = n < 3 ? 2745 : 3059.5, y = d === 'up' ? [225, 245, 267] : [427, 404, 381];
    return T(x, y[0], 'Dry Pump' + n, 84, 17, {...m, c: pv}) + T(gx, y[1], 'Gate' + n, 45, 17, {...m, c: pg}) + T(gx, y[2], 'TMP' + n, 44, 17, {...m, c: pt});
  }).join('') +
  T(2896, 267, 'Cryo Pump1', 94, 17, {...m, c: pc}) + T(2896, 381, 'Cryo Pump2', 94, 17, {...m, c: pc}) +
  L(2602, 261, 2671, 261, 2.5) + '<path d="M2662 257L2672 261L2662 265" fill="none" stroke="#000" stroke-width="2"/>' +
  T(2602, 281, 'BEAM', 55, 19, {w: 700}) +
  T(2632, 311, 'Gate', 37, 17, {w: 700, c: pg}) + T(2632, 330, 'LEBT', 38, 17, {w: 700, c: pg}) + T(3146, 311, 'Gate', 37, 17, {w: 700, c: pg}) + T(3146, 330, 'MEBT', 43, 17, {w: 700, c: pg}) +
  T(2751, 327, 'RFQ', 62, 31, {w: 700}) + T(2882, 328, '0.10', 65, 31, {w: 700});

// switch rows: text, text width, then centre lines of text, switch and lamp
function rows(id, top, x, sx, lx, lamp, list) {
  let prev = top;
  $(id).innerHTML = list.map(([t, w, cy, sy, ly]) => {
    const mt = cy - 30 - prev; prev = cy + 30;
    return `<div class="flex h-[60px] items-start" style="margin-top:${mt}px;padding-left:${x}px">
      <div class="flex shrink-0 items-center h-[60px]" style="width:${sx - x}px"><span class="leading-none whitespace-pre" data-w="${w}">${t}</span></div>
      <svg class="w-[120px] h-[62px] shrink-0 overflow-visible" style="margin-top:${sy - cy + 3}px"><use href="#switch" width="120" height="62"/></svg>
      <svg class="w-[48px] h-[48px] shrink-0" style="margin-top:${ly - cy + 6}px;margin-left:${lx - sx - 120 - 24}px" viewBox="-24 -24 48 48"><circle r="23" fill="url(#ring)"/><circle r="20.500" fill="url(#${lamp})"/></svg></div>`;
  }).join('');
}
rows('dp', 478, 86, 249, 427, 'ledOn', [['DP #1', 84, 583, 582, 583], ['DP #2', 84, 660, 660, 660], ['DP #3', 84, 738, 738, 738], ['DP #4', 84, 817, 818, 818]]);
rows('tm', 938, 77, 246, 427, 'ledOff', [['TMP #1', 109, 1043, 1042, 1043], ['TMP #2', 109, 1123, 1123, 1123], ['TMP #3', 109, 1199, 1199, 1199], ['TMP #4', 109, 1279, 1279, 1279]]);
rows('cp', 478, 104, 258, 431, 'ledOff', [['CP #1', 83, 554, 553, 554], ['CP #2', 83, 630, 629, 631]]);
rows('gv', 725, 104, 266, 431, 'ledOff', [['GV #1', 86, 820, 824, 817], ['GV #2', 86, 912, 914, 914], ['GV #3', 86, 1004, 1003, 1006], ['GV #4', 86, 1096, 1095, 1096], ['GV LEBT', 118, 1188, 1191, 1192], ['GV MEBT', 131, 1280, 1271, 1280]]);

// navigation buttons
const house = '<svg class="w-[50px] h-[46px] mr-[4px] shrink-0" viewBox="0 0 50 46"><path d="M3 24h44v20H3z" fill="#ececee"/><path d="M8 20L25 5 42 20V45H8z" fill="#e2e3e8"/><path d="M3 22L25 3 47 22" fill="none" stroke="#b52020" stroke-width="6"/><path d="M13 20h10v8H13zM27 20h10v8H27zM13 32h10v8H13zM28 32h10v13H28z" fill="#44558c"/></svg>';
$('nav').innerHTML = [['HOME', 25], ['ECR-IS', 15], ['LEBT', 80], ['LI', 90], ['R', 96], ['M', 84], ['Q', 91], ['Cryog', 43], ['Vac', 64], ['Beam d', 7], ['Data B', 23]].map(([t, p], i) =>
  `<div class="flex items-center h-[94px] w-[250px] bg-[#f0f0f0] border-b-2 border-[#a0a0a0] whitespace-pre" style="padding-left:${p}px">${i ? '' : house}<span class="leading-none">${t}</span></div>`).join('');

// gear outline
{
  const pts = [];
  for (let i = 0; i < 8; i++) for (const [a, r] of [[-16, 35], [-8, 37], [-7, 49], [7, 49], [8, 37], [16, 35]]) {
    const t = (i * 45 + a) * Math.PI / 180; pts.push((Math.cos(t) * r).toFixed(1) + ',' + (Math.sin(t) * r).toFixed(1));
  }
  $('gear').innerHTML = `<polygon points="${pts.join(' ')}"/>`;
}

// tracking: spread each label over its nominal width once styles and fonts are in place
function track() {
  document.querySelectorAll('[data-w]').forEach(e => {
    e.style.flexShrink = 0;
    e.style.letterSpacing = '0px';
    const cs = getComputedStyle(e), ctx = track.ctx || (track.ctx = document.createElement('canvas').getContext('2d'));
    ctx.font = `${cs.fontStyle} ${cs.fontWeight} ${cs.fontSize} ${cs.fontFamily}`;
    const gap = (+e.dataset.w - ctx.measureText(e.textContent).width) / e.textContent.length;
    e.style.letterSpacing = Math.max(-2, Math.min(2, gap)) + 'px';
  });
}
track();
addEventListener('load', () => { track(); requestAnimationFrame(track); });
document.fonts.ready.then(track);
</script>
</body>
</html>
